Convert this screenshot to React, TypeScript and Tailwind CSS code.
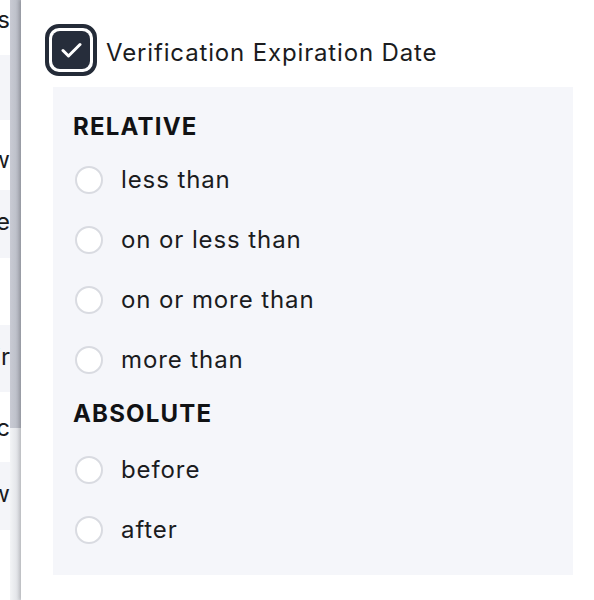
import React from 'react';

const BG_ROWS = [
  { h: 55, gray: false, t: 'ss', ty: 'pt-2' },
  { h: 65, gray: true, t: '', ty: '' },
  { h: 70, gray: false, t: 'w', ty: 'pt-7' },
  { h: 68, gray: true, t: 'e', ty: 'pt-5' },
  { h: 67, gray: false, t: '', ty: '' },
  { h: 67, gray: true, t: 'ir', ty: 'pt-5' },
  { h: 70, gray: false, t: 'oc', ty: 'pt-6' },
  { h: 68, gray: true, t: 'w', ty: 'pt-5' },
  { h: 70, gray: false, t: '', ty: '' },
];

const Radio = ({ label }: { label: string }) => (
  <label className="flex items-center h-[60px] gap-[18px] pl-[22px]">
    <span className="w-[28px] h-[28px] rounded-full border-2 border-[#d9dbe1] bg-white shrink-0" />
    <span className="text-[24px] text-[#1b1c1e] leading-none tracking-[0.9px]">{label}</span>
  </label>
);

const App: React.FC = () => {
  return (
    <div className="w-[594px] h-[600px] flex overflow-hidden bg-white" style={{ fontFamily: 'Inter, "Liberation Sans", sans-serif' }}>
      {/* page behind the drawer */}
      <div className="w-[10px] shrink-0 flex flex-col overflow-hidden">
        {BG_ROWS.map((r, i) => (
          <div
            key={i}
            style={{ height: r.h }}
            className={`shrink-0 flex justify-end ${r.gray ? 'bg-[#f4f5f9]' : 'bg-white'}`}
          >
            <span className={`text-[24px] leading-none text-[#1b1c1e] whitespace-nowrap ${r.ty}`}>{r.t}</span>
          </div>
        ))}
      </div>
      {/* scrollbar */}
      <div className="w-[11px] shrink-0 flex flex-col bg-[#f0f1f4]">
        <div className="h-[428px] bg-gradient-to-r from-[#c9cbd4] via-[#bfc2cb] to-[#aeb1bb]" />
        <div className="flex-1 bg-gradient-to-r from-[#f3f4f6] to-[#dadce1]" />
      </div>
      {/* drawer */}
      <div className="flex-1 bg-white shadow-[-2px_0_3px_rgba(0,0,0,0.15)] pl-[24px] pr-[20px] pt-[24px]">
        <div className="flex items-center gap-[9px]">
          <div className="w-[52px] h-[52px] rounded-[14px] border-4 border-[#242b38] p-[3px]">
            <div className="w-full h-full rounded-[8px] bg-[#262d3b] flex items-center justify-center">
              <svg width="21" height="16" viewBox="0 0 21 16" fill="none" stroke="white" strokeWidth="3" strokeLinecap="round" strokeLinejoin="round">
                <path d="M2 8.5l5.5 5.5L19 2.5" />
              </svg>
            </div>
          </div>
          <span className="text-[24px] text-[#1b1c1e] leading-none tracking-[0.85px] pt-[5px]">Verification Expiration Date</span>
        </div>
        <div className="mt-[11px] ml-[8px] w-[520px] h-[488px] bg-[#f5f6fa] pt-[28px]">
          <div className="pl-[20px] text-[24px] font-bold text-[#111214] leading-none h-[35px] tracking-[1.2px]">RELATIVE</div>
          <Radio label="less than" />
          <Radio label="on or less than" />
          <Radio label="on or more than" />
          <Radio label="more than" />
          <div className="pl-[20px] text-[24px] font-bold text-[#111214] leading-none h-[38px] pt-[12px] box-content tracking-[1.2px]">ABSOLUTE</div>
          <Radio label="before" />
          <Radio label="after" />
        </div>
      </div>
    </div>
  );
};

export default App;
